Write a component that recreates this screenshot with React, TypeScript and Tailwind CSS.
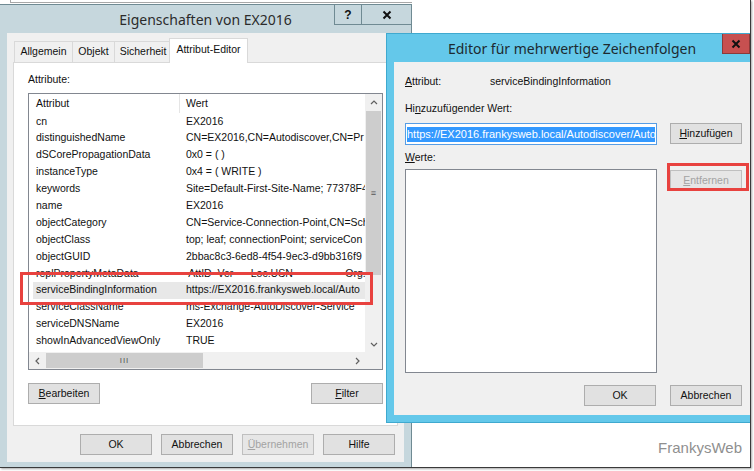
import type { ReactNode } from 'react';

const rows: [string, string][] = [
  ['cn', 'EX2016'],
  ['distinguishedName', 'CN=EX2016,CN=Autodiscover,CN=Pr'],
  ['dSCorePropagationData', '0x0 = ( )'],
  ['instanceType', '0x4 = ( WRITE )'],
  ['keywords', 'Site=Default-First-Site-Name; 77378F4'],
  ['name', 'EX2016'],
  ['objectCategory', 'CN=Service-Connection-Point,CN=Sch'],
  ['objectClass', 'top; leaf; connectionPoint; serviceCon'],
  ['objectGUID', '2bbac8c3-6ed8-4f54-9ec3-d9bb316f9'],
  ['replPropertyMetaData', ' AttID  Ver      Loc.USN                  Org.D'],
  ['serviceBindingInformation', 'https://EX2016.frankysweb.local/Auto'],
  ['serviceClassName', 'ms-Exchange-AutoDiscover-Service'],
  ['serviceDNSName', 'EX2016'],
  ['showInAdvancedViewOnly', 'TRUE'],
];

function Btn({ children, disabled = false }: { children: ReactNode; disabled?: boolean }) {
  const look = disabled
    ? 'border-[#bfbfbf] bg-[#e6e6e6] text-[#a3a3a3]'
    : 'border-[#adadad] bg-[#e1e1e1] text-[#111]';
  return (
    <div className={`flex h-[21px] w-[72px] shrink-0 items-center justify-center border ${look}`}>{children}</div>
  );
}

function Arrow({ dir }: { dir: 'up' | 'down' | 'left' | 'right' }) {
  const d = {
    up: 'M2 6 L5 3 L8 6',
    down: 'M2 4 L5 7 L8 4',
    left: 'M6 2 L3 5 L6 8',
    right: 'M4 2 L7 5 L4 8',
  }[dir];
  return (
    <svg width="10" height="10" viewBox="0 0 10 10">
      <path d={d} fill="none" stroke="#606060" strokeWidth="1.2" />
    </svg>
  );
}

function Tab({ label, active = false, w }: { label: string; active?: boolean; w: string }) {
  if (active)
    return (
      <div className={`relative z-10 -mx-[2px] -mb-px flex h-[25px] ${w} items-start justify-center border border-b-0 border-[#d9d9d9] bg-white pt-[3px]`}>
        {label}
      </div>
    );
  return (
    <div className={`flex h-[21px] ${w} items-center justify-center border border-b-0 border-[#d9d9d9] bg-[#f0f0f0] -mr-px`}>
      {label}
    </div>
  );
}

function LeftDialog() {
  return (
    <div className="absolute left-0 top-[4px] flex h-[464px] w-[412px] flex-col border-r border-b border-t border-[#6f8a93] bg-[#c6d7dd]">
      <div className="relative h-[28px] shrink-0">
        <div className="absolute inset-x-0 top-[4px] text-center font-['Noto_Sans',sans-serif] text-[14px] text-[#2b2b2b]">
          Eigenschaften von EX2016
        </div>
        <div className="absolute right-0 top-0 flex">
          <div className="flex h-[20px] w-[27px] items-center justify-center border-l border-b border-[#6f8a93] text-[12px] font-bold">?</div>
          <div className="flex h-[20px] w-[50px] items-center justify-center border-l border-b border-[#6f8a93]">
            <svg width="10" height="10" viewBox="0 0 10 10">
              <path d="M1.5 1.5 L8.5 8.5 M8.5 1.5 L1.5 8.5" stroke="#111" strokeWidth="2" />
            </svg>
          </div>
        </div>
      </div>

      <div className="mx-[7px] mb-[5px] flex flex-1 flex-col bg-[#f0f0f0] pl-[6px] pt-[5px]">
        <div className="flex h-[24px] items-end pl-[1px]">
          <Tab label="Allgemein" w="w-[59px]" />
          <Tab label="Objekt" w="w-[43px]" />
          <Tab label="Sicherheit" w="w-[58px]" />
          <Tab label="Attribut-Editor" w="w-[79px]" active />
        </div>

        <div className="flex h-[364px] w-[385px] flex-col border border-[#d9d9d9] bg-white pl-[14px] pt-[10px]">
          <div className="h-[13px] leading-[13px]">Attribute:</div>

          <div className="mt-[7px] flex h-[277px] w-[355px] flex-col border border-[#828790] bg-white">
            <div className="flex min-h-0 flex-1">
              <div className="flex-1 overflow-hidden">
                <div className="flex h-[19px] items-center">
                  <div className="h-full w-[151px] border-r border-[#e5e5e5] pl-[7px] leading-[19px]">Attribut</div>
                  <div className="pl-[6px]">Wert</div>
                </div>
                {rows.map(([a, v]) => (
                  <div
                    key={a}
                    className={`ml-[4px] flex h-[16.9px] items-center whitespace-nowrap ${a === 'serviceBindingInformation' ? 'bg-[#e8e8e8]' : ''}`}
                  >
                    <div className="w-[147px] shrink-0 pl-[3px]">{a}</div>
                    <div className="whitespace-pre pl-[6px]">{v}</div>
                  </div>
                ))}
              </div>
              <div className="flex w-[17px] flex-col bg-[#f0f0f0]">
                <div className="flex h-[17px] items-center justify-center">
                  <Arrow dir="up" />
                </div>
                <div className="flex-1 px-[1px]">
                  <div className="flex h-[164px] items-center justify-center bg-[#cdcdcd] text-[9px] leading-none text-[#555]">≡</div>
                </div>
                <div className="flex h-[17px] items-center justify-center">
                  <Arrow dir="down" />
                </div>
              </div>
            </div>
            <div className="flex h-[17px]">
              <div className="flex flex-1 bg-[#f0f0f0]">
                <div className="flex w-[17px] items-center justify-center">
                  <Arrow dir="left" />
                </div>
                <div className="flex-1 py-[1px]">
                  <div className="flex h-full w-[157px] items-center justify-center bg-[#cdcdcd] text-[8px] leading-none tracking-[1px] text-[#555]">III</div>
                </div>
                <div className="flex w-[17px] items-center justify-center">
                  <Arrow dir="right" />
                </div>
              </div>
              <div className="w-[17px] bg-[#f0f0f0]" />
            </div>
          </div>

          <div className="mt-[13px] flex w-[355px] justify-between">
            <Btn><span><u>B</u>earbeiten</span></Btn>
            <Btn><span><u>F</u>ilter</span></Btn>
          </div>
        </div>

        <div className="mt-[8px] flex justify-end gap-[9px] pr-[9px]">
          <Btn>OK</Btn>
          <Btn>Abbrechen</Btn>
          <Btn disabled><span><u>Ü</u>bernehmen</span></Btn>
          <Btn>Hilfe</Btn>
        </div>
      </div>
    </div>
  );
}

function RightDialog() {
  return (
    <div className="absolute left-[386px] top-[33px] flex h-[390px] w-[372px] flex-col border border-[#3fa9cf] bg-[#64c8ea]">
      <div className="relative h-[28px] shrink-0">
        <div className="absolute inset-x-0 top-[4px] text-center font-['Noto_Sans',sans-serif] text-[14px] text-[#1d2a30]">
          Editor für mehrwertige Zeichenfolgen
        </div>
        <div className="absolute right-[7px] top-0 flex h-[20px] w-[28px] items-center justify-center border-b border-l border-r border-[#8c3a3a] bg-[#c75050]">
          <svg width="10" height="10" viewBox="0 0 10 10">
            <path d="M1.5 1.5 L8.5 8.5 M8.5 1.5 L1.5 8.5" stroke="#111" strokeWidth="2" />
          </svg>
        </div>
      </div>

      <div className="mx-[7px] mb-[7px] flex flex-1 flex-col bg-[#f0f0f0] pl-[11px] pr-[8px] pt-[13px]">
        <div className="flex h-[13px] leading-[13px]">
          <div className="w-[85px]"><u>A</u>ttribut:</div>
          <div>serviceBindingInformation</div>
        </div>
        <div className="mt-[14px] h-[13px] leading-[13px]">
          Hi<u>n</u>zuzufügender Wert:
        </div>
        <div className="mt-[8px] flex gap-[13px]">
          <div className="flex h-[22px] w-[252px] items-center overflow-hidden border border-[#569de5] bg-white px-[1px]">
            <span className="block w-[248px] overflow-hidden whitespace-nowrap bg-[#3399ff] text-[11px] leading-[15px] text-white">
              https://EX2016.frankysweb.local/Autodiscover/Auto
            </span>
          </div>
          <Btn><span><u>H</u>inzufügen</span></Btn>
        </div>
        <div className="mt-[6px] h-[13px] leading-[13px]">
          <u>W</u>erte:
        </div>
        <div className="mt-[5px] flex gap-[13px]">
          <div className="h-[204px] w-[252px] border border-[#828790] bg-white" />
          <div className="pt-[1px]">
            <Btn disabled><span><u>E</u>ntfernen</span></Btn>
          </div>
        </div>
        <div className="mt-[12px] flex justify-end gap-[14px]">
          <Btn>OK</Btn>
          <Btn>Abbrechen</Btn>
        </div>
      </div>
    </div>
  );
}

export default function App() {
  return (
    <div className="h-[471px] w-[754px] bg-white font-['Liberation_Sans',Arial,sans-serif] text-[10.5px] text-[#111]">
      <div className="relative h-[468px] w-[751px] overflow-hidden border-b border-r border-[#3a3a3a] bg-white shadow-[1px_1px_2px_rgba(0,0,0,0.35)]">
        <div className="absolute left-[10px] top-[-1px] h-[4px] w-[402px] border-b border-l border-[#a8a8a8]" />
        <LeftDialog />
        <RightDialog />
        <div className="absolute left-[20px] top-[272px] h-[33px] w-[353px] border-[3px] border-[#e8423f]" />
        <div className="absolute left-[667px] top-[163px] h-[28px] w-[82px] border-[3px] border-[#e8423f]" />
        <div className="absolute bottom-[8px] right-[8px] text-[15px] text-[#8f8f8f]">FrankysWeb</div>
      </div>
    </div>
  );
}
